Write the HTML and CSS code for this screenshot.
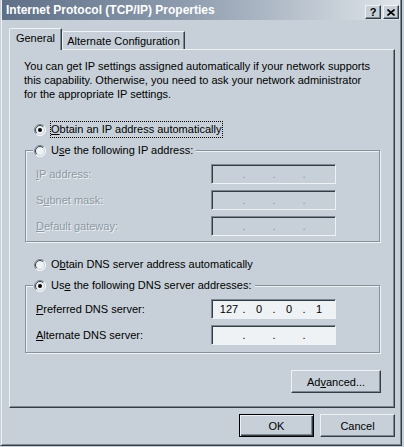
FILE: index.html
```html
<!DOCTYPE html>
<html>
<head>
<meta charset="utf-8">
<title>Internet Protocol (TCP/IP) Properties</title>
<link rel="stylesheet" href="styles.css">
</head>
<body>
<div class="window">
  <div class="titlebar">
    <span class="title">Internet Protocol (TCP/IP) Properties</span>
    <div class="tb-buttons">
      <span class="tb-btn help">?</span>
      <span class="tb-btn close"><svg width="8" height="7" viewBox="0 0 8 7"><path d="M0.5 0.5L7.5 6.5M7.5 0.5L0.5 6.5" stroke="#000" stroke-width="1.6" fill="none"/></svg></span>
    </div>
  </div>
  <div class="main">
    <div class="tabs">
      <div class="tab active">General</div>
      <div class="tab">Alternate Configuration</div>
    </div>
    <div class="panel">
      <p class="intro">You can get IP settings assigned automatically if your network supports<br>this capability. Otherwise, you need to ask your network administrator<br>for the appropriate IP settings.</p>

      <div class="radio-row first">
        <svg class="radio" width="12" height="12" viewBox="0 0 12 12"><circle cx="6" cy="6" r="5.5" fill="#eef2f5"/><path d="M2.1 9.9A5.5 5.5 0 0 1 9.9 2.1" fill="none" stroke="#7a8994"/><path d="M2.8 9.2A4.5 4.5 0 0 1 9.2 2.8" fill="none" stroke="#343d44"/><path d="M9.9 2.1A5.5 5.5 0 0 1 2.1 9.9" fill="none" stroke="#fbfcfd"/><path d="M9.2 2.8A4.5 4.5 0 0 1 2.8 9.2" fill="none" stroke="#c7d0d8"/><circle cx="6" cy="6" r="2" fill="#000"/></svg>
        <span class="rlabel focus"><u>O</u>btain an IP address automatically</span>
      </div>

      <fieldset class="group">
        <legend class="radio-row">
          <svg class="radio" width="12" height="12" viewBox="0 0 12 12"><circle cx="6" cy="6" r="5.5" fill="#eef2f5"/><path d="M2.1 9.9A5.5 5.5 0 0 1 9.9 2.1" fill="none" stroke="#7a8994"/><path d="M2.8 9.2A4.5 4.5 0 0 1 9.2 2.8" fill="none" stroke="#343d44"/><path d="M9.9 2.1A5.5 5.5 0 0 1 2.1 9.9" fill="none" stroke="#fbfcfd"/><path d="M9.2 2.8A4.5 4.5 0 0 1 2.8 9.2" fill="none" stroke="#c7d0d8"/></svg>
          <span class="rlabel">U<u>s</u>e the following IP address:</span>
        </legend>
        <div class="rows">
          <span class="flabel disabled"><u>I</u>P address:</span>
          <div class="field off"><span class="seg"></span><span class="dot">.</span><span class="seg"></span><span class="dot">.</span><span class="seg"></span><span class="dot">.</span><span class="seg"></span></div>
          <span class="flabel disabled">S<u>u</u>bnet mask:</span>
          <div class="field off"><span class="seg"></span><span class="dot">.</span><span class="seg"></span><span class="dot">.</span><span class="seg"></span><span class="dot">.</span><span class="seg"></span></div>
          <span class="flabel disabled"><u>D</u>efault gateway:</span>
          <div class="field off"><span class="seg"></span><span class="dot">.</span><span class="seg"></span><span class="dot">.</span><span class="seg"></span><span class="dot">.</span><span class="seg"></span></div>
        </div>
      </fieldset>

      <div class="radio-row third">
        <svg class="radio" width="12" height="12" viewBox="0 0 12 12"><circle cx="6" cy="6" r="5.5" fill="#eef2f5"/><path d="M2.1 9.9A5.5 5.5 0 0 1 9.9 2.1" fill="none" stroke="#7a8994"/><path d="M2.8 9.2A4.5 4.5 0 0 1 9.2 2.8" fill="none" stroke="#343d44"/><path d="M9.9 2.1A5.5 5.5 0 0 1 2.1 9.9" fill="none" stroke="#fbfcfd"/><path d="M9.2 2.8A4.5 4.5 0 0 1 2.8 9.2" fill="none" stroke="#c7d0d8"/></svg>
        <span class="rlabel">O<u>b</u>tain DNS server address automatically</span>
      </div>

      <fieldset class="group dns">
        <legend class="radio-row">
          <svg class="radio" width="12" height="12" viewBox="0 0 12 12"><circle cx="6" cy="6" r="5.5" fill="#eef2f5"/><path d="M2.1 9.9A5.5 5.5 0 0 1 9.9 2.1" fill="none" stroke="#7a8994"/><path d="M2.8 9.2A4.5 4.5 0 0 1 9.2 2.8" fill="none" stroke="#343d44"/><path d="M9.9 2.1A5.5 5.5 0 0 1 2.1 9.9" fill="none" stroke="#fbfcfd"/><path d="M9.2 2.8A4.5 4.5 0 0 1 2.8 9.2" fill="none" stroke="#c7d0d8"/><circle cx="6" cy="6" r="2" fill="#000"/></svg>
          <span class="rlabel">Us<u>e</u> the following DNS server addresses:</span>
        </legend>
        <div class="rows">
          <span class="flabel"><u>P</u>referred DNS server:</span>
          <div class="field on"><span class="seg">127</span><span class="dot">.</span><span class="seg">0</span><span class="dot">.</span><span class="seg">0</span><span class="dot">.</span><span class="seg">1</span></div>
          <span class="flabel"><u>A</u>lternate DNS server:</span>
          <div class="field on"><span class="seg"></span><span class="dot">.</span><span class="seg"></span><span class="dot">.</span><span class="seg"></span><span class="dot">.</span><span class="seg"></span></div>
        </div>
      </fieldset>

      <div class="adv-row">
        <button class="btn adv">Ad<u>v</u>anced...</button>
      </div>
    </div>
    <div class="dlg-buttons">
      <button class="btn default">OK</button>
      <button class="btn">Cancel</button>
    </div>
  </div>
</div>
</body>
</html>
```
FILE: styles.css
```css
html, body {
  margin: 0;
  padding: 0;
}
body {
  background: #c7d0d8;
  font-family: "Liberation Sans", Arial, sans-serif;
  font-size: 11px;
  color: #000;
}
.window {
  width: 402px;
  height: 446px;
  box-sizing: border-box;
  border-left: 1px solid #c7d0d8;
  border-right: 1px solid #343d44;
  border-bottom: 1px solid #343d44;
  box-shadow: inset 1px 0 #eef2f5, inset -1px -1px #7a8994;
  padding: 0 1px 1px 1px;
  display: flex;
  flex-direction: column;
  background: #c7d0d8;
}
.titlebar {
  height: 20px;
  flex: none;
  display: flex;
  align-items: flex-end;
  padding: 0 1px 1px 4px;
  box-sizing: border-box;
  background: linear-gradient(to right, #5e6f87 0%, #8d9bad 45%, #dfe5ea 100%);
}
.title {
  align-self: center;
  color: #fff;
  font-weight: bold;
  font-size: 12px;
  line-height: 14px;
  padding-top: 1px;
}
.tb-buttons {
  margin-left: auto;
  display: flex;
  gap: 2px;
}
.tb-btn {
  width: 16px;
  height: 14px;
  box-sizing: border-box;
  background: #c7d0d8;
  border: 1px solid;
  border-color: #eef2f5 #343d44 #343d44 #eef2f5;
  box-shadow: inset -1px -1px #7a8994;
  display: flex;
  align-items: center;
  justify-content: center;
  font-weight: bold;
  font-size: 11px;
  line-height: 11px;
}
.main {
  flex: 1;
  display: flex;
  flex-direction: column;
  padding: 8px 5px 0 7px;
}
.tabs {
  display: flex;
  align-items: flex-end;
  height: 21px;
  position: relative;
  z-index: 1;
}
.tab {
  box-sizing: border-box;
  width: 123px;
  height: 18px;
  padding-top: 3px;
  line-height: 13px;
  text-align: center;
  background: #c7d0d8;
  border-left: 1px solid #eef2f5;
  border-top: 1px solid #eef2f5;
  border-right: 1px solid #343d44;
  box-shadow: inset -1px 0 #7a8994;
  border-top-left-radius: 2px;
  border-top-right-radius: 1px;
}
.tab.active {
  width: 53px;
  height: 22px;
  margin-bottom: -1px;
  padding-top: 3px;
}
.panel {
  height: 359px;
  box-sizing: border-box;
  border: 1px solid;
  border-color: #eef2f5 #343d44 #343d44 #eef2f5;
  box-shadow: inset -1px -1px #7a8994;
  padding: 9px 14px 0 15px;
}
.intro {
  margin: 0 0 0 -1px;
  line-height: 14px;
  white-space: nowrap;
}
.radio-row {
  display: flex;
  align-items: center;
  height: 17px;
}
.radio {
  display: block;
  flex: none;
}
.radio-row.first {
  margin-top: 20px;
  padding-left: 9px;
}
.radio-row.third {
  margin-top: 14px;
  padding-left: 9px;
}
.rlabel {
  margin-left: 4px;
  box-sizing: border-box;
  height: 17px;
  line-height: 15px;
  border: 1px solid transparent;
  padding: 0 1px 0 0;
  white-space: nowrap;
}
.rlabel.focus {
  border: 1px dotted #000;
}
.group {
  margin: 4px 0 0 0;
  padding: 0;
  min-width: 0;
  border: 1px solid #84929d;
  box-shadow: inset 1px 1px #eef2f5, 1px 1px #eef2f5;
}
.group legend {
  margin-left: 7px;
  padding: 0 1px;
  background: #c7d0d8;
}
.rows {
  display: grid;
  grid-template-columns: 175px 125px;
  row-gap: 6px;
  align-items: center;
  padding: 5px 0 5px 10px;
}
.group.dns .rows {
  padding-bottom: 7px;
}
.flabel {
  line-height: 13px;
  white-space: nowrap;
}
.flabel.disabled {
  color: #8b98a3;
  text-shadow: 1px 1px 0 #eef2f5;
}
.field {
  width: 125px;
  height: 20px;
  box-sizing: border-box;
  border: 1px solid;
  border-color: #7a8994 #eef2f5 #eef2f5 #7a8994;
  box-shadow: inset 1px 1px #343d44;
  display: flex;
  align-items: center;
  padding-left: 5px;
  line-height: 13px;
}
.field.off {
  background: #c7d0d8;
  color: #8795a1;
}
.field.on {
  background: #eef2f5;
}
.seg {
  width: 24px;
  text-align: center;
}
.dot {
  width: 6px;
  text-align: center;
}
.adv-row {
  display: flex;
  justify-content: flex-end;
  margin: 17px -1px 0 0;
}
.btn {
  font-family: "Liberation Sans", Arial, sans-serif;
  font-size: 11px;
  color: #000;
  width: 75px;
  height: 23px;
  box-sizing: border-box;
  padding: 0;
  background: #c7d0d8;
  border: 1px solid;
  border-color: #eef2f5 #343d44 #343d44 #eef2f5;
  box-shadow: inset -1px -1px #7a8994;
  border-radius: 0;
}
.btn.adv {
  width: 90px;
}
.btn.default {
  border: 1px solid #000;
  box-shadow: inset 1px 1px #eef2f5, inset -1px -1px #343d44, inset -2px -2px #7a8994;
}
.dlg-buttons {
  display: flex;
  justify-content: flex-end;
  gap: 6px;
  margin-top: 6px;
}
```
